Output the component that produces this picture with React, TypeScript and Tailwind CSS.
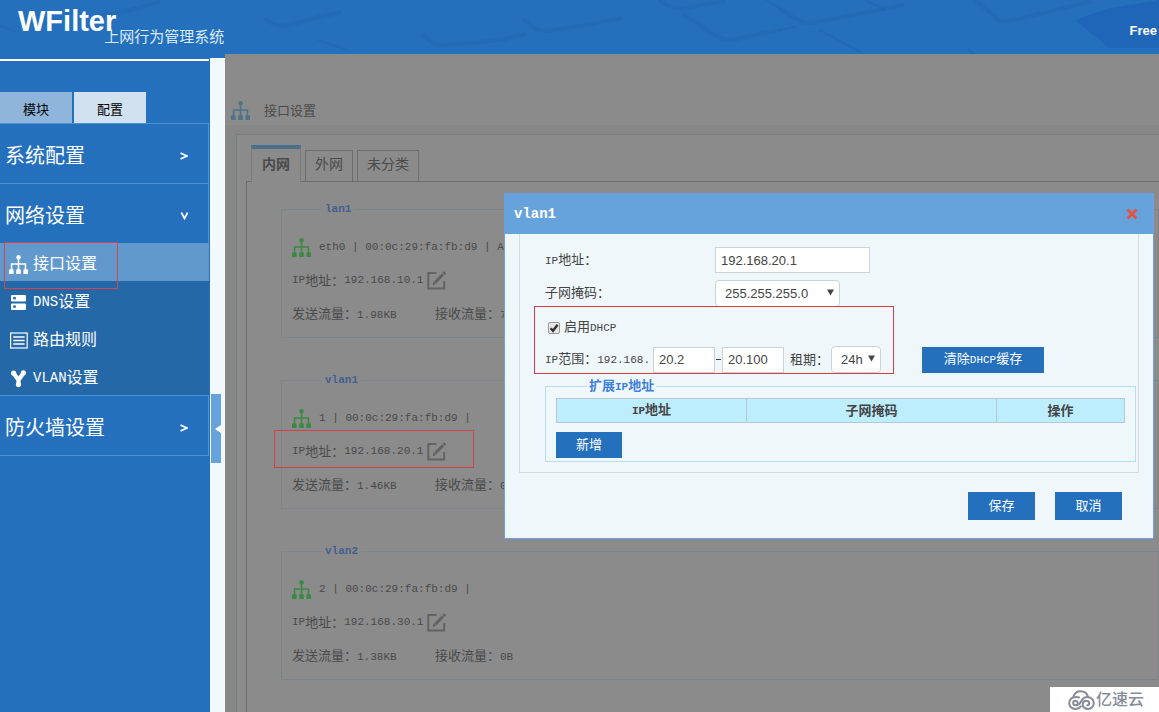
import { useState } from 'react'
import type { ReactNode } from 'react'
import clsx from 'clsx'

function SitemapIcon({ className }: { className?: string }) {
  return (
    <svg viewBox="0 0 19 19" className={className} fill="currentColor" aria-hidden="true">
      <circle cx="9.5" cy="2.2" r="2.2" />
      <path d="M8.7 3h1.6v5.2h6.9v7h-1.5V9.7h-5.4V15H8.7V9.7H3.3v5.5H1.8v-7h6.9z" />
      <path d="M0 15.2q0-1 1-1h2.6q1 0 1 1V19H0zM7.2 15.2q0-1 1-1h2.6q1 0 1 1V19H7.2zM14.4 15.2q0-1 1-1H18q1 0 1 1V19h-4.6z" />
    </svg>
  )
}

function ServerIcon({ className }: { className?: string }) {
  return (
    <svg viewBox="0 0 19 19" className={className} aria-hidden="true">
      <rect x="2" y="2" width="15" height="6.5" rx="1" fill="#fff" />
      <rect x="2" y="10.5" width="15" height="6.5" rx="1" fill="#fff" />
      <circle cx="5.5" cy="5.2" r="1.4" fill="#2468a8" />
      <circle cx="5.5" cy="13.7" r="1.4" fill="#2468a8" />
    </svg>
  )
}

function RouteIcon({ className }: { className?: string }) {
  return (
    <svg viewBox="0 0 19 19" className={className} fill="none" stroke="currentColor" aria-hidden="true">
      <rect x="1.6" y="2" width="16.6" height="15" strokeWidth="1.2" />
      <path d="M4.2 6h11.4M4.2 9.5h11.4M4.2 13h11.4" strokeWidth="1.4" />
    </svg>
  )
}

function VlanIcon({ className }: { className?: string }) {
  return (
    <svg viewBox="0 0 19 19" className={className} aria-hidden="true">
      <path d="M4.8 4.5 9.5 11v5M14.2 4.5 9.5 11" fill="none" stroke="#fff" strokeWidth="4.2" strokeLinejoin="round" />
      <circle cx="4.6" cy="4" r="2.6" fill="#fff" />
      <circle cx="14.4" cy="3.8" r="2.6" fill="#fff" />
      <circle cx="9.5" cy="15.6" r="2.6" fill="#fff" />
    </svg>
  )
}

function EditIcon({ className }: { className?: string }) {
  return (
    <svg viewBox="0 0 19 19" className={className} fill="none" stroke="currentColor" aria-hidden="true">
      <path d="M9.5 2H1.3v15.6h15.9V10" strokeWidth="2" />
      <path d="M8.3 11.2 16 3.4" strokeWidth="3" />
      <path d="m16.5 2.9 1.6-1.7" strokeWidth="3" />
      <path d="m5.6 13.9.9-3.8 2.9 2.9z" fill="currentColor" stroke="none" />
    </svg>
  )
}

function Chevron({ open }: { open?: boolean }) {
  return (
    <svg viewBox="0 0 10 10" className="h-2.5 w-2.5" fill="none" stroke="#fff" strokeWidth="1.7" aria-hidden="true">
      {open ? <path d="m3.3 1.5 3.2 6 3.2-6" /> : <path d="m2.5 2 6.500 3-6.500 3" />}
    </svg>
  )
}

function HeaderArt() {
  return (
    <svg
      viewBox="0 0 1159 54"
      preserveAspectRatio="xMaxYMin slice"
      className="absolute inset-0 h-full w-full"
      fill="none"
      stroke="#1d60a5"
      strokeOpacity="0.3"
      strokeLinecap="round"
      aria-hidden="true"
    >
      <path d="M1159 0 1110 8 1075 20l34 28h50z" fill="#1f66b8" stroke="none" />
      <g strokeWidth="4">
        <path d="M266 19q10 9 22 6l52-13" />
        <path d="M424 35q10 12 20 10l56-5 25-6" />
        <path d="M525 20q10 12 22 11l40-6 34-7" />
        <path d="M660 1q12 9 26 7l38-7" />
        <path d="m684 15 34 22q8 4 18 2l44-9" />
        <path d="m780 10 22 12q6 2 16 0l85-17" />
        <path d="m975 0 22 19q6 4 16 1l80-19" />
        <path d="M100 16q30-4 58-14" />
      </g>
      <g strokeWidth="2">
        <path d="m766 0 20 12M820 30l40 22M865 0l20 10M318 40l30 10M0 26l16 6M780 30l14-3M968 49l6 5" />
      </g>
    </svg>
  )
}

// narrow Latin companion for the 13px Chinese text
function Mono({ children }: { children: ReactNode }) {
  return <span className="font-['Liberation_Mono',monospace] text-[11px]">{children}</span>
}

const subMenu = [
  { latin: '', name: '接口设置', icon: SitemapIcon, active: true },
  { latin: 'DNS', name: '设置', icon: ServerIcon },
  { latin: '', name: '路由规则', icon: RouteIcon },
  { latin: 'VLAN', name: '设置', icon: VlanIcon },
]

const ports = [
  { name: 'lan1', dev: 'eth0', extra: 'Address', ip: '192.168.10.1', tx: '1.98KB', rx: '7.21KB' },
  { name: 'vlan1', dev: '1', extra: '', ip: '192.168.20.1', tx: '1.46KB', rx: '0B', marked: true },
  { name: 'vlan2', dev: '2', extra: '', ip: '192.168.30.1', tx: '1.38KB', rx: '0B' },
]

const tabs = ['内网', '外网', '未分类']

function MenuGroup({ name, open }: { name: string; open?: boolean }) {
  return (
    <button className="flex h-[60px] w-full items-center justify-between border-t border-r border-[#4a91d8] pt-1 pr-5 pl-[5px] text-xl text-white">
      {name}
      <Chevron open={open} />
    </button>
  )
}

function Sidebar() {
  return (
    <aside className="w-[210px] shrink-0 bg-[#2470bd] pt-[5px]">
      <div className="mr-px border-t-2 border-white pt-[31px]">
        <div className="flex gap-0.5">
          <button className="h-[31px] w-[72px] bg-[#8fb5db] pt-1 text-[13px] text-black">模块</button>
          <button className="h-[31px] w-[72px] bg-[#d2e1f0] pt-1 text-[13px] text-black">配置</button>
        </div>
        <nav className="border-b border-[#4a91d8]">
          <MenuGroup name="系统配置" />
          <MenuGroup name="网络设置" open />
          <ul className="bg-[#2468a8]">
            {subMenu.map((item) => (
              <li key={item.latin + item.name} className="relative">
                <a
                  href="#"
                  className={clsx(
                    'flex h-[38px] items-center pt-1 pl-[9px] text-base text-white',
                    item.active && 'bg-[#6299cd]'
                  )}
                >
                  <item.icon className="mr-[5px] h-[19px] w-[19px]" />
                  {item.latin && (
                    <span className="font-['Liberation_Mono',monospace] text-sm">{item.latin}</span>
                  )}
                  {item.name}
                </a>
                {item.active && (
                  <div className="pointer-events-none absolute -top-px left-1 z-10 h-[47px] w-[114px] border border-[#d8434f]" />
                )}
              </li>
            ))}
          </ul>
          <MenuGroup name="防火墙设置" />
        </nav>
      </div>
    </aside>
  )
}

function PortPanel({ port }: { port: (typeof ports)[number] }) {
  return (
    <fieldset className="relative mb-[33px] border border-[#7d8588] pt-[13px] pb-[7px] pl-[10px] whitespace-nowrap">
      <legend className="ml-[30px] px-[3px] font-['Liberation_Mono',monospace] text-[11px] leading-[18px] font-bold text-[#42608f]">
        {port.name}
      </legend>
      <div className="flex h-[33px] items-center">
        <SitemapIcon className="mr-2 h-[19px] w-[19px] text-[#3a8a44]" />
        <Mono>
          {port.dev} | 00:0c:29:fa:fb:d9 | {port.extra}
        </Mono>
      </div>
      <div className="flex h-[33px] items-center">
        <Mono>IP</Mono>地址：<Mono>{port.ip}</Mono>
        <button className="ml-1" title="编辑">
          <EditIcon className="h-[19px] w-[19px] text-[#636363]" />
        </button>
      </div>
      <div className="flex h-[33px] items-center">
        <span className="w-[143px]">
          发送流量：<Mono>{port.tx}</Mono>
        </span>
        <span>
          接收流量：<Mono>{port.rx}</Mono>
        </span>
      </div>
      {port.marked && (
        <div className="pointer-events-none absolute top-[41px] -left-2 h-[38px] w-[200px] border border-[#d2414b]" />
      )}
    </fieldset>
  )
}

function Select({ id, options, className }: { id: string; options: string[]; className: string }) {
  return (
    <div className={clsx('relative', className)}>
      <select
        id={id}
        className="h-[27px] w-full appearance-none rounded-sm border border-[#c9d3da] bg-white pl-[9px] text-[13px] text-[#444]"
      >
        {options.map((o) => (
          <option key={o}>{o}</option>
        ))}
      </select>
      <svg
        viewBox="0 0 8 7"
        className="pointer-events-none absolute top-[9px] right-1.5 h-[7px] w-[7px]"
        fill="#444"
        aria-hidden="true"
      >
        <path d="M0 0h8L4 7z" />
      </svg>
    </div>
  )
}

const inputClass = 'h-[26px] border border-[#c9d3da] bg-white px-[5px] text-[13px] text-[#444]'
const buttonClass = 'bg-[#2470bd] text-white'

function VlanDialog({ onClose }: { onClose: () => void }) {
  const [ip, setIp] = useState('192.168.20.1')
  const [dhcp, setDhcp] = useState(true)

  return (
    <div
      role="dialog"
      aria-labelledby="dialog-title"
      className="absolute top-[139px] right-[5px] z-20 w-[650px] border border-[#6f9fe0] bg-[#eff7fb] text-[13px] leading-5 text-[#444]"
    >
      <div className="flex h-10 items-center justify-between bg-[#66a3dd] pr-[15px] pl-[9px]">
        <h2 id="dialog-title" className="font-['Liberation_Mono',monospace] text-sm font-bold text-white">
          vlan1
        </h2>
        <button onClick={onClose} aria-label="关闭">
          <svg viewBox="0 0 12 12" className="h-3 w-3" stroke="#e94f3c" strokeWidth="2.8" aria-hidden="true">
            <path d="m1.5 1.5 9 9M10.5 1.5l-9 9" />
          </svg>
        </button>
      </div>

      <div className="mx-3.5 border border-t-0 border-[#d3dde4] pt-[13px] pr-0.5 pb-2.5 pl-[25px]">
        <div className="flex h-[33px] items-start">
          <label htmlFor="ip" className="w-[170px] pt-[3px]">
            <Mono>IP</Mono>地址：
          </label>
          <input id="ip" value={ip} onChange={(e) => setIp(e.target.value)} className={clsx(inputClass, 'w-[155px]')} />
        </div>
        <div className="flex h-[33px] items-start">
          <label htmlFor="mask" className="w-[170px] pt-[3px]">
            子网掩码：
          </label>
          <Select id="mask" options={['255.255.255.0', '255.255.0.0']} className="w-[125px]" />
        </div>
        <div className="relative h-[63px]">
          <div className="flex h-[33px] items-center pb-1 pl-[3px]">
            <span className="relative mr-1 h-3 w-3">
              <input
                id="dhcp"
                type="checkbox"
                checked={dhcp}
                onChange={(e) => setDhcp(e.target.checked)}
                className="block h-3 w-3 appearance-none rounded-xs border border-[#9a9a9a] bg-[#e6e6e6]"
              />
              {dhcp && (
                <svg
                  viewBox="0 0 12 12"
                  className="pointer-events-none absolute inset-0 h-3 w-3"
                  fill="none"
                  stroke="#333"
                  strokeWidth="2.4"
                  aria-hidden="true"
                >
                  <path d="m2.6 6.2 2.4 2.6 4.6-6" />
                </svg>
              )}
            </span>
            <label htmlFor="dhcp">
              启用<Mono>DHCP</Mono>
            </label>
          </div>
          <div className="flex items-center">
            <label htmlFor="from" className="w-[108px] whitespace-nowrap">
              <Mono>IP</Mono>范围：<Mono>192.168.</Mono>
            </label>
            <input id="from" defaultValue="20.2" className={clsx(inputClass, 'w-[62px]')} />
            <span className="mx-px h-px w-[5px] bg-[#444]" />
            <input aria-label="结束地址" defaultValue="20.100" className={clsx(inputClass, 'w-[62px]')} />
            <label htmlFor="lease" className="w-[47px] pl-1.5 whitespace-nowrap">
              租期：
            </label>
            <Select id="lease" options={['24h', '12h']} className="w-[50px]" />
            <button className={clsx(buttonClass, 'ml-[41px] h-[26px] w-[122px]')}>
              清除<Mono>DHCP</Mono>缓存
            </button>
          </div>
          <div className="pointer-events-none absolute -top-[7px] -left-[11px] h-[68px] w-[360px] border border-[#d2414b]" />
        </div>
        <fieldset className="border border-[#b9dcee] px-2.5 pt-px pb-[3px]">
          <legend className="ml-[31px] px-0.5 leading-5 font-bold text-[#3c80dc]">
            扩展<Mono>IP</Mono>地址
          </legend>
          <table className="w-full table-fixed border-collapse bg-[#bdeefe]">
            <thead>
              <tr className="h-6">
                <th className="w-[190px] border border-[#b6c9d1]">
                  <Mono>IP</Mono>地址
                </th>
                <th className="w-[250px] border border-[#b6c9d1]">子网掩码</th>
                <th className="border border-[#b6c9d1]">操作</th>
              </tr>
            </thead>
          </table>
          <button className={clsx(buttonClass, 'mt-[9px] h-[26px] w-[66px]')}>新增</button>
        </fieldset>
      </div>

      <div className="flex justify-end gap-5 pt-[19px] pr-[31px] pb-[18px]">
        <button className={clsx(buttonClass, 'h-7 w-[67px]')}>保存</button>
        <button onClick={onClose} className={clsx(buttonClass, 'h-7 w-[67px]')}>
          取消
        </button>
      </div>
    </div>
  )
}

export default function App() {
  const [dialogOpen, setDialogOpen] = useState(true)
  const [tab, setTab] = useState(tabs[0])

  return (
    <div className="relative flex min-h-screen flex-col overflow-hidden font-['Liberation_Sans','Noto_Sans_CJK_SC',sans-serif]">
      <header className="relative flex h-[54px] justify-between bg-[#2470bd] text-white">
        <HeaderArt />
        <div className="relative flex pl-[18px]">
          <h1 className="pt-[5px] text-[29px] leading-8 font-bold">WFilter</h1>
          <span className="-ml-3 pt-[26px] text-[15px] leading-[22px] text-[#dcebf8]">上网行为管理系统</span>
        </div>
        <a href="#" className="relative pt-[21px] pr-0.5 text-[13px] leading-5 font-bold">
          Free
        </a>
      </header>

      <div className="flex flex-1">
        <Sidebar />

        {/* Collapse strip */}
        <div className="flex w-[15px] shrink-0 flex-col border-t-4 border-[#2470bd] bg-[#f1f9fc] pt-[336px] pl-px">
          <button className="flex h-[69px] w-2.5 items-center justify-end bg-[#66a3dd]" aria-label="收起">
            <svg viewBox="0 0 6 8" className="h-2 w-1.5" fill="#fff" aria-hidden="true">
              <path d="M6 0v8L0 4z" />
            </svg>
          </button>
        </div>

        <main className="relative flex min-w-0 flex-1 flex-col bg-[#8b8b8b] text-[13px] text-[#4a4a4a]">
          <div className="flex h-[71px] items-end pb-[5px] pl-1.5">
            <SitemapIcon className="mr-3.5 h-[19px] w-[19px] text-[#4d7388]" />
            <span className="leading-[18px]">接口设置</span>
          </div>
          <div className="flex flex-1 flex-col bg-[#878787] pt-[9px] pl-[11px]">
            <div className="flex flex-1 flex-col border-t border-l border-[#7b7f81] bg-[#8b8b8b] pt-[10px] pl-[9px]">
              <div className="flex h-9 items-end gap-1 pl-[5px]">
                {tabs.map((t) => (
                  <button
                    key={t}
                    onClick={() => setTab(t)}
                    className={clsx(
                      'border-x text-sm',
                      t === tab
                        ? 'z-10 -mb-px h-[37px] border-t-4 border-x-[#7a7a7a] border-t-[#4c708c] bg-[#8b8b8b] px-2.5 pb-1 font-bold'
                        : 'h-[31px] border-t border-[#6d6d6d] px-[9px] pb-1'
                    )}
                  >
                    {t}
                  </button>
                ))}
              </div>
              <div className="flex-1 border-t border-l border-[#6d6d6d] pt-[18px] pl-[34px]">
                {ports.map((p) => (
                  <PortPanel key={p.name} port={p} />
                ))}
              </div>
            </div>
          </div>

          {dialogOpen && <VlanDialog onClose={() => setDialogOpen(false)} />}
        </main>
      </div>

      <div className="absolute right-0 bottom-0 z-30 flex h-[26px] w-[109px] items-center gap-px bg-white pl-[18px] text-[#878c99]">
        <svg viewBox="0 0 27 20" className="h-5 w-[27px]" fill="none" stroke="currentColor" strokeWidth="2" strokeLinecap="round" aria-hidden="true">
          <path d="M5.500 6.500C6.600 3.300 9.200 1.200 12.500 1.200c3.700 0 6.600 2.200 7.500 5.600" />
          <path d="M9.500 13c0-1.300-.9-2.200-2.100-2.200S5.200 11.700 5.200 13s1 2.300 2.500 2.300c3 0 4.200-1.700 5.600-4.300C14.600 8.300 16.400 6.900 19.200 6.900c3.800 0 6.600 2.700 6.600 6.100 0 3.300-2.500 5.900-5.800 5.900-3.200 0-5.300-1.900-5.300-4.500 0-2.200 1.500-3.700 3.500-3.700 1.800 0 3 1.200 3 2.600 0 1.200-.8 2-1.900 2" />
          <path d="M11 7.500C10 7 8.900 6.800 7.600 6.900 3.900 7 1.200 9.700 1.200 13c0 3.400 2.700 5.900 6.100 5.900 2.500 0 4.300-.9 5.500-2.600" />
        </svg>
        <span className="text-base leading-5 font-medium">亿速云</span>
      </div>
    </div>
  )
}
